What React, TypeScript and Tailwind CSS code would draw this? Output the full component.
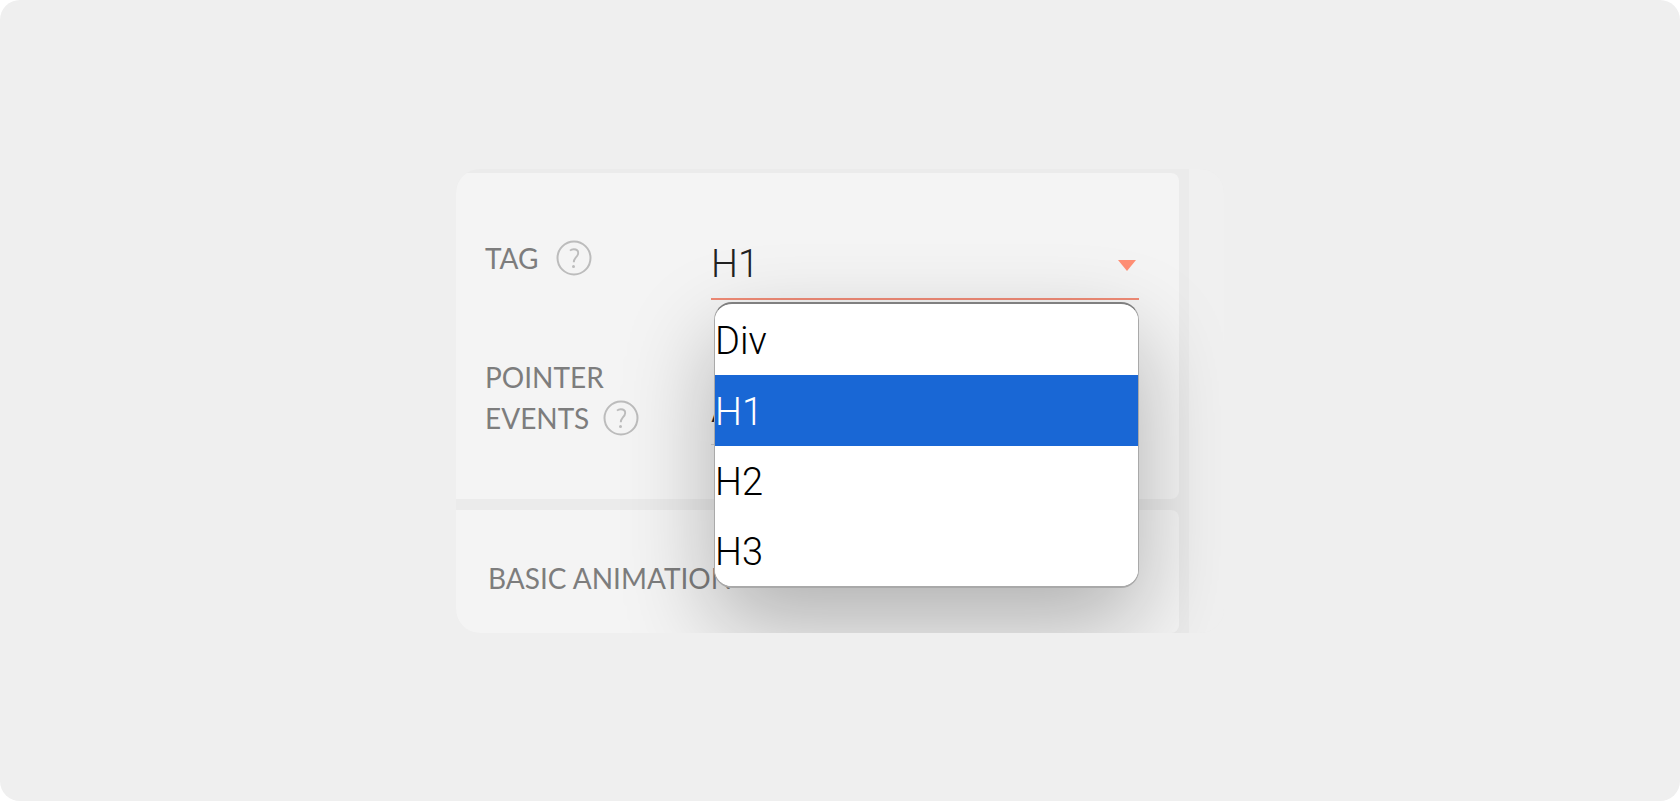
import { useState } from "react";

const TAGS = ["Div", "H1", "H2", "H3"];

function HelpButton({ topic }: { topic: string }) {
  return (
    <button type="button" aria-label={`Help: ${topic}`} className="inline-flex shrink-0 text-[#bcbcbc]">
      <svg width="36" height="36" viewBox="0 0 36 36" fill="none" stroke="currentColor">
        <circle cx="18" cy="18" r="16.5" strokeWidth="2" />
        <path d="M14 10.600c1-.900 2.300-1.300 3.800-1.300 2.700 0 4.400 1.400 4.400 3.700 0 1.900-1.100 3.200-2.500 4.700-1.300 1.500-1.900 2.500-1.900 4.600" strokeWidth="1.900" />
        <circle cx="17.500" cy="26.500" r="1.500" fill="currentColor" stroke="none" />
      </svg>
    </button>
  );
}

function TagMenu({ value, onPick }: { value: string; onPick: (tag: string) => void }) {
  return (
    <div
      role="listbox"
      aria-label="Tag options"
      className="absolute top-full right-0 left-[3px] z-10 mt-[2px] overflow-hidden rounded-[18px] border border-t-2 border-b-2 border-[#a9a9a9] border-t-[#808080] bg-white pt-px shadow-[0_36px_90px_rgba(0,0,0,0.28)]"
    >
      {TAGS.map((tag) => (
        <button
          key={tag}
          type="button"
          role="option"
          aria-selected={tag === value}
          onClick={() => onPick(tag)}
          className={
            tag === value
              ? "block h-[71px] w-full bg-[#1967d5] pt-1 text-left font-[Roboto,sans-serif] text-[38px] font-light text-white"
              : "block h-[70px] w-full bg-white pt-1 text-left font-[Roboto,sans-serif] text-[38px] font-light text-black"
          }
        >
          {tag}
        </button>
      ))}
    </div>
  );
}

export default function App() {
  const [tag, setTag] = useState("H1");

  return (
    <div className="min-h-screen bg-white">
      <main className="flex min-h-screen items-center justify-center rounded-[20px] bg-[#efefef] font-[Lato,sans-serif]">
        <div className="flex w-full max-w-[768px] overflow-hidden rounded-[24px] bg-[#ebebeb]">
          <div className="flex flex-1 flex-col gap-[11px] pt-1">
            <section className="rounded-r-lg bg-[#f4f4f4] pt-14 pr-10 pb-[54px] pl-[29px]">
              <div className="grid grid-cols-[226px_1fr] gap-y-[57px]">
                <div className="flex items-start gap-[18px] pt-[9px] text-[28px] leading-[41px] text-[#7d7d7d]">
                  <label htmlFor="tag">TAG</label>
                  <div className="flex h-[41px] items-center">
                    <HelpButton topic="Tag" />
                  </div>
                </div>
                <div className="relative">
                  <select
                    id="tag"
                    value={tag}
                    onChange={(e) => setTag(e.target.value)}
                    className="block h-[71px] w-full appearance-none rounded-none border-b-2 border-[#f08b76] bg-transparent pt-[2px] font-[Roboto,sans-serif] text-[38px] font-light text-[#222222] outline-none"
                  >
                    {TAGS.map((t) => (
                      <option key={t}>{t}</option>
                    ))}
                  </select>
                  <svg
                    className="pointer-events-none absolute top-[31px] right-[3px]"
                    width="18"
                    height="11"
                    viewBox="0 0 18 11"
                    aria-hidden="true"
                  >
                    <path d="M0 0h18L9 11z" fill="#ff8f75" />
                  </svg>
                  <TagMenu value={tag} onPick={setTag} />
                </div>

                <div className="text-[28px] leading-[41px] text-[#7d7d7d]">
                  <label htmlFor="pointer-events" className="block">
                    POINTER
                  </label>
                  <div className="flex items-center gap-[14px]">
                    <label htmlFor="pointer-events">EVENTS</label>
                    <HelpButton topic="Pointer events" />
                  </div>
                </div>
                <select
                  id="pointer-events"
                  className="mt-[17px] block h-[71px] w-full appearance-none rounded-none border-b border-[#cfcfcf] bg-transparent pt-[2px] font-[Roboto,sans-serif] text-[38px] font-light text-[#222222] outline-none"
                >
                  <option>Auto</option>
                </select>
              </div>
            </section>
            <section className="rounded-r-lg bg-[#f4f4f4] px-8 pt-12 pb-[34px]">
              <h2 className="text-[28px] leading-[41px] text-[#7d7d7d]">BASIC ANIMATION</h2>
            </section>
          </div>
          <div className="ml-[10px] w-[35px] bg-[#f0f0f0]" />
        </div>
      </main>
    </div>
  );
}
